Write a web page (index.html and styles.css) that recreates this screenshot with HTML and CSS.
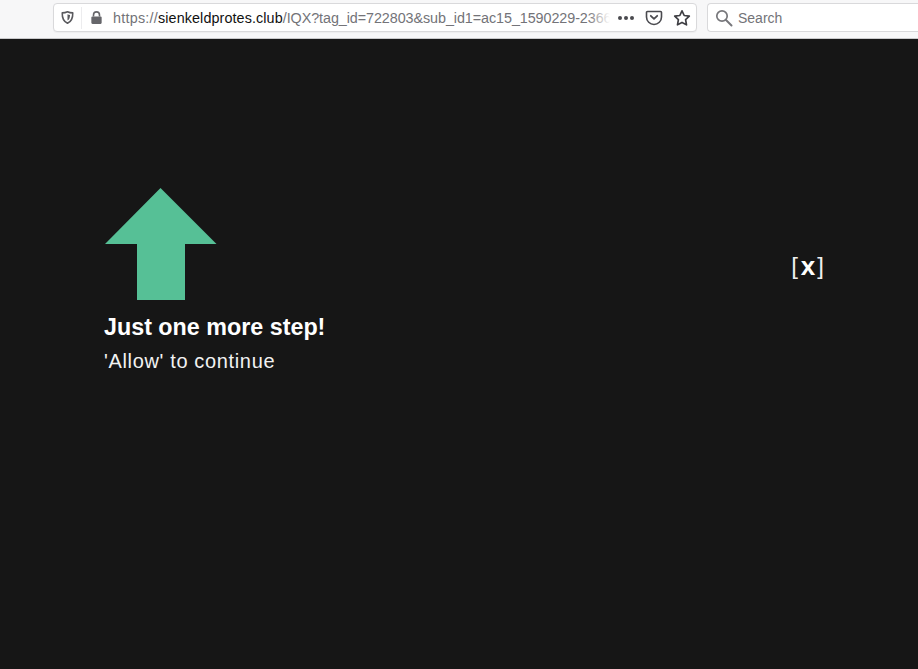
FILE: index.html
```html
<!DOCTYPE html>
<html lang="en">
<head>
<meta charset="utf-8">
<title>Just one more step!</title>
<link rel="stylesheet" href="styles.css">
</head>
<body>
<header class="toolbar">
  <div class="urlbar">
    <svg class="ico shield" viewBox="0 0 16 16"><path d="M8 1.800c2 .9 3.600 1.200 5.600 1.300.2 5.200-1.400 9-5.600 11.100C3.800 12.100 2.200 8.300 2.400 3.100 4.400 3 6 2.700 8 1.800z" fill="none" stroke="#5a5a5e" stroke-width="1.700" stroke-linejoin="round"/><path d="M8 4.500c1 .4 1.700.6 2.700.7 0 2.800-.8 4.800-2.700 6z" fill="#5a5a5e"/></svg>
    <span class="sep"></span>
    <svg class="ico lock" viewBox="0 0 16 16"><path d="M4.800 7V5.200a3.200 3.200 0 0 1 6.400 0V7" fill="none" stroke="#66666a" stroke-width="1.700"/><rect x="2.500" y="6.800" width="11" height="8" rx="1.200" fill="#66666a"/></svg>
    <div class="url"><span class="dim scheme">https://</span><span class="host">sienkeldprotes.club</span><span class="dim path">/IQX?tag_id=722803&amp;sub_id1=ac15_1590229-2366</span></div>
    <div class="dots"><i></i><i></i><i></i></div>
    <svg class="ico pocket" viewBox="0 0 18 16"><path d="M2.500 1.500h13a1 1 0 0 1 1 1V7a7.500 7.500 0 0 1-15 0V2.500a1 1 0 0 1 1-1z" fill="none" stroke="#4a4a4f" stroke-width="1.600"/><path d="M5.800 5.800 9 8.800l3.200-3" fill="none" stroke="#4a4a4f" stroke-width="1.800" stroke-linecap="round" stroke-linejoin="round"/></svg>
    <svg class="ico star" viewBox="0 0 18 18"><path d="M9 1.800l2.200 4.700 5.100.7-3.700 3.500.9 5.100L9 13.400l-4.500 2.400.9-5.100-3.700-3.500 5.100-.7z" fill="none" stroke="#3f3f44" stroke-width="1.700" stroke-linejoin="round"/></svg>
  </div>
  <div class="searchbar">
    <svg class="ico glass" viewBox="0 0 18 18"><circle cx="7" cy="7" r="5.200" fill="none" stroke="#77777b" stroke-width="1.700"/><path d="M11 11l5.500 5.500" stroke="#77777b" stroke-width="2" stroke-linecap="round"/></svg>
    <span class="search-label">Search</span>
  </div>
</header>
<main class="page">
  <section class="prompt">
    <svg class="arrow" viewBox="0 0 112 112"><path d="M55.500 0 111.500 56H80V112H32V56H0z" fill="#56c096"/></svg>
    <h1 class="title">Just one more step!</h1>
    <p class="sub">'Allow' to continue</p>
  </section>
  <div class="close"><span class="br">[</span><b>x</b><span class="br">]</span></div>
</main>
</body>
</html>
```
FILE: styles.css
```css
* { box-sizing: border-box; }
html, body { margin: 0; height: 100%; overflow: hidden; }
body { background: #161616; font-family: "Liberation Sans", Arial, sans-serif; display: flex; flex-direction: column; }

.toolbar { height: 39px; flex: none; background: #f7f7f8; border-bottom: 1px solid #c9c9cb; display: flex; align-items: flex-start; padding: 3px 0 0 53px; gap: 10px; }
.urlbar { width: 644px; height: 29px; background: #fff; border: 1px solid #d9d9db; border-radius: 4px; display: flex; align-items: center; padding-left: 6px; box-shadow: 0 1px 1px rgba(0,0,0,.04); }
.searchbar { flex: 1; height: 29px; background: #fff; border: 1px solid #d9d9db; border-right: 0; border-radius: 4px 0 0 4px; display: flex; align-items: center; padding-left: 7px; gap: 5px; }

.ico { flex: none; display: block; }
.shield { width: 15px; height: 15px; }
.sep { width: 1px; height: 22px; background: #ececee; margin: 0 7px 0 6px; }
.lock { width: 15px; height: 15px; }
.url { width: 497px; margin-left: 9px; font-size: 14.350px; white-space: nowrap; overflow: hidden; position: relative; }
.url::after { content: ""; position: absolute; top: 0; right: 0; bottom: 0; width: 22px; background: linear-gradient(to right, rgba(255,255,255,0), #fff); }
.dim { color: #737378; }
.scheme { letter-spacing: .25px; }
.host { color: #111; letter-spacing: .1px; }
.path { letter-spacing: -.07px; }
.dots { display: flex; gap: 2px; margin-left: 8px; }
.dots i { width: 4px; height: 4px; border-radius: 50%; background: #4a4a4f; display: block; }
.pocket { width: 18px; height: 16px; margin-left: 11px; }
.star { width: 18px; height: 18px; margin-left: 10px; }
.glass { width: 18px; height: 18px; }
.search-label { font-size: 14px; color: #737378; }

.page { flex: 1; display: flex; justify-content: space-between; align-items: flex-start; padding: 149px 94px 0 104px; }
.arrow { width: 112px; height: 112px; display: block; margin-left: 1px; }
.title { margin: 13px 0 0; font-size: 23.300px; line-height: 28px; font-weight: 700; color: #fff; }
.sub { margin: 8px 0 0; font-size: 20px; line-height: 25px; color: #f2f2f2; letter-spacing: .65px; }
.close { margin-top: 64px; color: #fff; display: flex; align-items: center; gap: 2px; font-size: 24px; line-height: 28px; }
.close .br { color: #eee; font-weight: 400; }
.close b { font-weight: 700; font-size: 26px; margin-left: 1px; }
```
